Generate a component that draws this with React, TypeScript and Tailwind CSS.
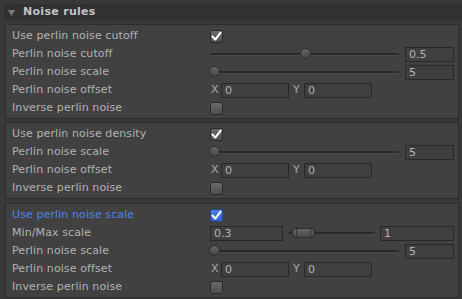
import React from 'react'

const font = { fontFamily: '"DejaVu Sans", "Liberation Sans", sans-serif' }

function Checkbox({ checked = false, blue = false }: { checked?: boolean; blue?: boolean }) {
  return (
    <div
      className={`w-[13px] h-[13px] rounded-[2px] border flex items-center justify-center ${
        blue
          ? 'border-[#24438a] bg-gradient-to-b from-[#4c7ee8] to-[#3461c7]'
          : 'border-[#2a2a2a] bg-gradient-to-b from-[#6a6a6a] to-[#4e4e4e]'
      }`}
    >
      {checked && (
        <svg width="11" height="11" viewBox="0 0 11 11">
          <path d="M1.5 5.5 L4.3 8.6 L9.6 1.6" fill="none" stroke="#ffffff" strokeWidth="2" strokeLinecap="round" strokeLinejoin="round" />
        </svg>
      )}
    </div>
  )
}

function Field({ value, className = '' }: { value: string; className?: string }) {
  return (
    <div className={`h-[15px] border border-[#282828] bg-[#3f3f3f] text-[11px] leading-[13px] text-[#b4b4b4] pl-[3px] ${className}`}>
      {value}
    </div>
  )
}

function Track({ children }: { children?: React.ReactNode }) {
  return (
    <div className="relative flex-1 h-[12px] flex items-center">
      <div className="w-full h-[3px] rounded-full bg-[#2a2a2a] border-b border-[#4a4a4a]" />
      {children}
    </div>
  )
}

function Slider({ pos, value }: { pos: number; value: string }) {
  return (
    <div className="flex items-center gap-[6px]">
      <Track>
        <div
          className="absolute top-[0px] w-[11px] h-[11px] -ml-[5px] rounded-full bg-gradient-to-b from-[#666666] to-[#474747] border border-[#2c2c2c]"
          style={{ left: `${pos * 100}%` }}
        />
      </Track>
      <Field value={value} className="w-[49px]" />
    </div>
  )
}

function Offset() {
  return (
    <div className="flex items-center text-[11px] text-[#a8a8a8]">
      <span className="w-[11px] pl-[1px]">X</span>
      <Field value="0" className="w-[68px]" />
      <span className="w-[15px] pl-[4px]">Y</span>
      <Field value="0" className="w-[68px]" />
    </div>
  )
}

function MinMax() {
  return (
    <div className="flex items-center">
      <Field value="0.3" className="w-[73px]" />
      <div className="flex-1 px-[5px] flex">
        <Track>
          <div className="absolute left-[4px] top-[1px] w-[23px] h-[10px] rounded-[4px] bg-gradient-to-b from-[#666666] to-[#474747] border border-[#2c2c2c] flex justify-between">
            <div className="w-[1px] h-full bg-[#363636] ml-[3px]" />
            <div className="w-[1px] h-full bg-[#363636] mr-[3px]" />
          </div>
        </Track>
      </div>
      <Field value="1" className="w-[74px]" />
    </div>
  )
}

function Row({ label, blue = false, children }: { label: string; blue?: boolean; children: React.ReactNode }) {
  return (
    <div className="flex items-center h-[18px]">
      <div className={`w-[204px] pl-[6px] text-[11px] tracking-[0.1px] ${blue ? 'text-[#4f83f0]' : 'text-[#b2b2b2]'}`}>{label}</div>
      <div className="flex-1 pr-[4px]">{children}</div>
    </div>
  )
}

function Box({ children, className = '' }: { children: React.ReactNode; className?: string }) {
  return (
    <div className={`ml-[5px] w-[454px] border border-[#2d2d2d] bg-[#414141] pt-[2px] pb-[1px] ${className}`}>{children}</div>
  )
}

export default function App() {
  return (
    <div className="w-[462px] h-[299px] bg-[#383838] overflow-hidden" style={font}>
      <div className="h-[4px]" />
      <div className="h-[17px] ml-[4px] bg-[#313131] flex items-center">
        <svg width="7" height="6" viewBox="0 0 7 6" className="ml-[4px] mr-[8px]">
          <path d="M0 0 L7 0 L3.5 6 Z" fill="#7c7c7c" />
        </svg>
        <span className="text-[11px] font-bold text-[#c2c2c2] tracking-[0.3px]">Noise rules</span>
      </div>

      <Box className="mt-[3px]">
        <Row label="Use perlin noise cutoff"><Checkbox checked /></Row>
        <Row label="Perlin noise cutoff"><Slider pos={0.5} value="0.5" /></Row>
        <Row label="Perlin noise scale"><Slider pos={0.02} value="5" /></Row>
        <Row label="Perlin noise offset"><Offset /></Row>
        <Row label="Inverse perlin noise"><Checkbox /></Row>
      </Box>

      <Box className="mt-[3px]">
        <Row label="Use perlin noise density"><Checkbox checked /></Row>
        <Row label="Perlin noise scale"><Slider pos={0.02} value="5" /></Row>
        <Row label="Perlin noise offset"><Offset /></Row>
        <Row label="Inverse perlin noise"><Checkbox /></Row>
      </Box>

      <Box className="mt-[4px]">
        <Row label="Use perlin noise scale" blue><Checkbox checked blue /></Row>
        <Row label="Min/Max scale"><MinMax /></Row>
        <Row label="Perlin noise scale"><Slider pos={0.02} value="5" /></Row>
        <Row label="Perlin noise offset"><Offset /></Row>
        <Row label="Inverse perlin noise"><Checkbox /></Row>
      </Box>
    </div>
  )
}
